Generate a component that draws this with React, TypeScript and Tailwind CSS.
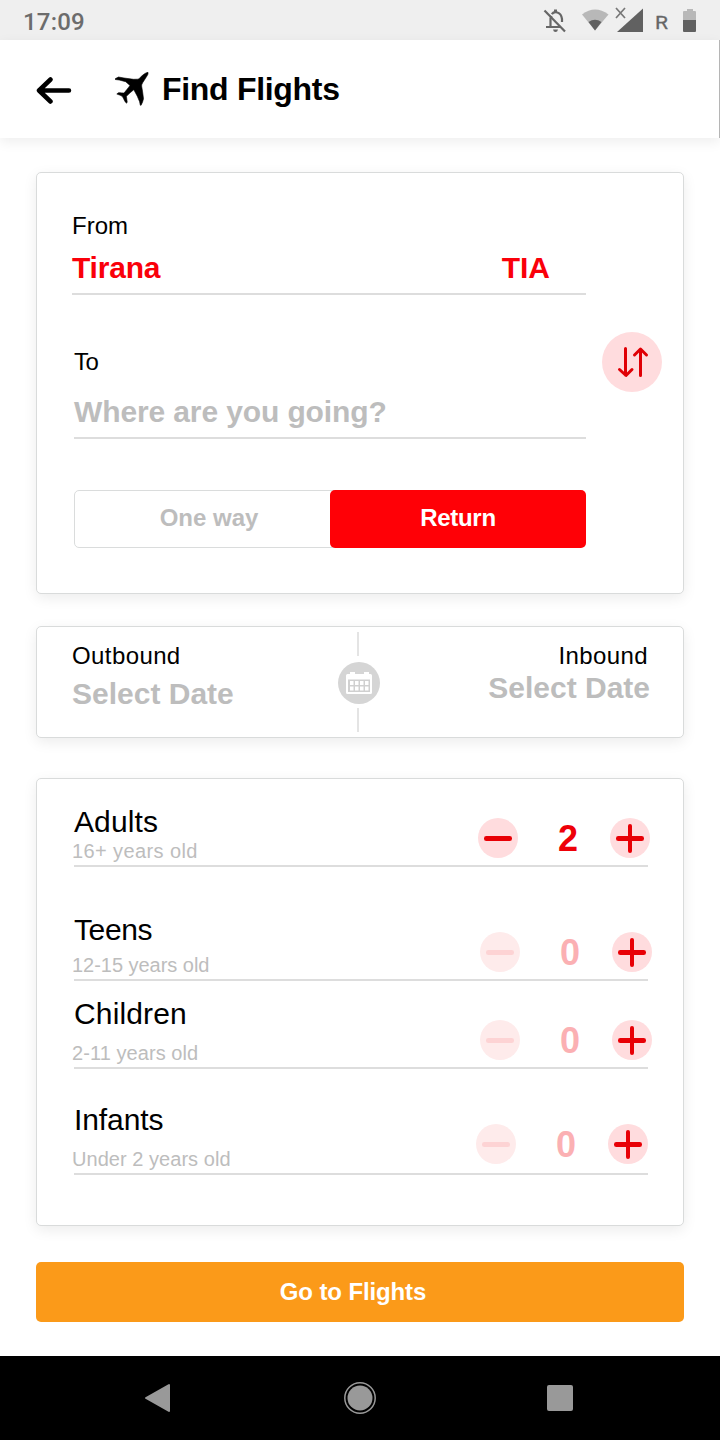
import React from "react";

const card =
  "rounded-[5px] border border-[#d9dbdb] bg-white shadow-[0_4px_14px_rgba(0,0,0,0.08)]";

function StatusBar() {
  return (
    <div className="flex h-10 shrink-0 items-center justify-between bg-[#efefef] pl-[23px] pr-[23px] font-['Roboto',sans-serif] text-[#6c6c6c]">
      <span className="pt-[3px] text-[24px] leading-7 font-medium tracking-[0.2px]">17:09</span>
      <svg width="156" height="40" viewBox="541 0 156 40" fill="none">
        <g stroke="#666" strokeWidth="2.2">
          <path d="M544.5 10.5 565 31.5" />
          <path d="M550.5 27V18.5L551.5 16M546 27h15M551.8 14.2C554 11.2 561 11 562 19v3" />
        </g>
        <path d="M554 9.5h3v3h-3zM553 29.5h5q-.5 2.5-2.5 2.5T553 29.5z" fill="#666" />
        <path d="M582 14.5Q595 4.5 608.5 14.5L595 30.5z" fill="#b8b8b8" />
        <path d="M588.5 22Q595 17.500 601.5 22L595 30.5z" fill="#616161" />
        <path d="M616 8 625 18M625 8 616 18" stroke="#777" strokeWidth="1.7" />
        <path d="M643 8.500V32H617z" fill="#616161" />
        <text x="655" y="29" fill="#666" stroke="#666" strokeWidth="0.3" fontSize="19" textLength="13" lengthAdjust="spacingAndGlyphs" fontFamily="Roboto">R</text>
        <path d="M687 9h6v2h2q1 0 1 1v8h-13v-8q0-1 1-1h3z" fill="#b8b8b8" />
        <path d="M683 20h13v11q0 1-1 1h-11q-1 0-1-1z" fill="#616161" />
      </svg>
    </div>
  );
}

function Header() {
  return (
    <header className="flex h-[98px] shrink-0 items-center border-r border-[#b5b5b5] bg-white pl-9 shadow-[0_4px_12px_rgba(0,0,0,0.07)]">
      <svg width="36" height="30" viewBox="0 0 36 30" fill="none" stroke="#000" strokeWidth="4.5" strokeLinecap="round" strokeLinejoin="round">
        <path d="M14.5 5.5 3 16.5 14.5 27.5M3 16.5H33" />
      </svg>
      <svg className="ml-[43px]" width="34" height="34" viewBox="115 72 34 34" fill="#000" stroke="#000" strokeWidth="0.6">
        <path d="M148 72.300c-3 .6-5.300 2.700-8 5.400-1 1-1.800 1.500-2.800 1.500l-3.700.1-9.500-1.300-5.500-1-3.300 1.700v.8l4 .5 6.500 1.700 4.300 3.800c-2.300 3-4.500 5.700-6 7.600-1.800-.2-3.500-.6-5.500-.4l-1.700 1.300 4.200 1.600 1.800 1.400.8 1.800 1.500 3 1.500 1.400.6-1.200-.8-5.700c2.500-2.400 5-4.800 7.400-6.600l3.500 6.500 2.300 5.500.7 3.500h.8l1.400-3 1-3.500-1-7.500-.9-5.200c0-1.500.4-2 1.200-3.500l3.500-5.500c1.500-2 2-3.200 1.700-4.700z" />
      </svg>
      <h1 className="ml-[13px] text-[32px] leading-9 font-bold tracking-[-0.3px]">Find Flights</h1>
    </header>
  );
}

function RouteCard() {
  return (
    <section className={`${card} flex h-[422px] pl-[35px]`}>
      <div className="w-[514px] pt-[39px]">
        <div className="text-[24px] leading-7">From</div>
        <div className="mt-[10px] flex justify-between border-b-2 border-[#ddd] pr-9 pb-[7px] text-[30px] leading-9 font-bold text-[#fa000a]">
          <span className="tracking-[-0.2px]">Tirana</span>
          <span>TIA</span>
        </div>
        <div className="pl-[2px]">
          <div className="mt-[53px] text-[24px] leading-7 tracking-[-0.4px]">To</div>
          <div className="mt-[18px] border-b-2 border-[#ddd] pb-[7px] text-[30px] leading-9 font-bold tracking-[-0.12px] text-[#bdbdbd]">
            Where are you going?
          </div>
          <div className="mt-[51px] flex h-[58px] text-[24px] leading-[54px] font-bold">
            <div className="h-full w-[264px] rounded-[5px] border border-[#dadcdc] pl-[6px] text-center text-[#bdbdbd]">
              One way
            </div>
            <div className="-ml-2 h-full w-64 rounded-[5px] bg-[#ff0006] pt-px text-center tracking-[-0.3px] text-white">
              Return
            </div>
          </div>
        </div>
      </div>
      <div className="mt-[159px] ml-4 h-[60px] w-[60px] rounded-full bg-[#ffdcde]">
        <svg width="60" height="60" viewBox="0 0 60 60" fill="none" stroke="#e00006" strokeWidth="3" strokeLinecap="round" strokeLinejoin="round">
          <path d="M23.5 16.5V43M17.5 37.5 24 43.5 30 37.5M38.5 43.5V17M32.5 23 38.5 17 44.5 23" />
        </svg>
      </div>
    </section>
  );
}

function DatesCard() {
  return (
    <section className={`${card} mt-8 flex h-28 pr-[33px] pl-[35px]`}>
      <div className="w-[266px] pt-[15px]">
        <div className="text-[24px] leading-7 tracking-[0.4px]">Outbound</div>
        <div className="mt-[6px] text-[30px] leading-9 font-bold text-[#bdbdbd]">Select Date</div>
      </div>
      <div className="flex w-[42px] flex-col items-center pt-[5px]">
        <div className="mr-[2px] h-6 w-[2px] bg-[#e4e4e4]" />
        <svg className="mt-[6px] mb-1 shrink-0" width="42" height="42" viewBox="0 0 42 42">
          <circle cx="21" cy="21" r="21" fill="#d5d5d5" />
          <path d="M9.500 12H12v-2h5v2h9v-2h5v2h1.500q1.500 0 1.500 1.500v17q0 1.500-1.500 1.500h-23Q8 32 8 30.500v-17Q8 12 9.500 12z" fill="#fff" />
          <rect x="10" y="17.500" width="22" height="12.500" fill="#d0d0d0" />
          <path d="M12 19h3.500v4H12zM17 19h3.500v4H17zM22 19h3.500v4H22zM27 19h3.500v4H27zM12 24.500h3.500v4H12zM17 24.500h3.500v4H17zM22 24.500h3.500v4H22zM27 24.500h3.500v4H27z" fill="#fff" />
        </svg>
        <div className="mr-[2px] h-6 w-[2px] bg-[#e4e4e4]" />
      </div>
      <div className="flex-1 pt-[15px] text-right">
        <div className="pr-[2px] text-[24px] leading-7 tracking-[0.4px]">Inbound</div>
        <div className="text-[30px] leading-9 font-bold text-[#bdbdbd]">Select Date</div>
      </div>
    </section>
  );
}

function RoundButton({ plus, disabled }: { plus?: boolean; disabled?: boolean }) {
  return (
    <svg width="40" height="40" viewBox="0 0 40 40">
      <circle cx="20" cy="20" r="20" fill={disabled ? "#feebeb" : "#ffdcde"} />
      <g fill={disabled ? "#fdd3d4" : "#e80006"}>
        <rect x="6" y="18" width="28" height="5" rx="2.3" />
        {plus && <rect x="18" y="6" width="4" height="29" rx="2" />}
      </g>
    </svg>
  );
}

type RowProps = {
  name: string;
  ages: string;
  count: number;
  box: string;
  nameClass: string;
  agesClass: string;
  stepper: string;
};

const rows: RowProps[] = [
  { name: "Adults", ages: "16+ years old", count: 2, box: "h-[63px]", nameClass: "tracking-[0.1px]", agesClass: "mt-px tracking-[0.4px]", stepper: "mb-[7px] -mr-[2px]" },
  { name: "Teens", ages: "12-15 years old", count: 0, box: "mt-[45px] h-[69px]", nameClass: "tracking-[-0.4px]", agesClass: "mt-[7px] tracking-[-0.03px]", stepper: "mb-[7px] -mr-[4px]" },
  { name: "Children", ages: "2-11 years old", count: 0, box: "mt-[15px] h-[73px]", nameClass: "tracking-[0.15px]", agesClass: "mt-[11px] tracking-[0.07px]", stepper: "mb-[7px] -mr-[4px]" },
  { name: "Infants", ages: "Under 2 years old", count: 0, box: "mt-[33px] h-[73px]", nameClass: "tracking-[-0.1px]", agesClass: "mt-[11px] tracking-[0.04px]", stepper: "mb-[9px]" },
];

function PassengerRow({ name, ages, count, box, nameClass, agesClass, stepper }: RowProps) {
  return (
    <div className={`${box} flex items-end justify-between border-b-2 border-[#ddd]`}>
      <div className="h-full">
        <div className={`${nameClass} text-[30px] leading-9`}>{name}</div>
        <div className={`${agesClass} -ml-[2px] text-[20px] leading-5 text-[#bdbdbd]`}>{ages}</div>
      </div>
      <div className={`${stepper} flex h-10 w-[172px] items-center justify-between`}>
        <RoundButton disabled={count === 0} />
        <span className={`${count === 0 ? "text-[#fbb0b3]" : "text-[#ee0008]"} pt-[2px] pl-2 text-[36px] leading-10 font-bold`}>
          {count}
        </span>
        <RoundButton plus />
      </div>
    </div>
  );
}

function NavBar() {
  return (
    <nav className="flex h-[84px] shrink-0 items-center justify-between bg-black px-[144px]">
      <svg width="32" height="32" viewBox="0 0 32 32">
        <path d="M2 16 25 3V29z" fill="#999" stroke="#999" strokeWidth="2" strokeLinejoin="round" />
      </svg>
      <svg width="32" height="32" viewBox="0 0 32 32">
        <circle cx="16" cy="16" r="15.2" fill="none" stroke="#999" strokeWidth="1.5" />
        <circle cx="16" cy="16" r="12.5" fill="#999" />
      </svg>
      <svg width="32" height="32" viewBox="0 0 32 32">
        <rect x="3" y="3" width="26" height="26" rx="2" fill="#999" />
      </svg>
    </nav>
  );
}

export default function App() {
  return (
    <div className="flex h-[1440px] w-[720px] flex-col overflow-hidden bg-white font-['Liberation_Sans',Arial,sans-serif] text-black">
      <StatusBar />
      <Header />
      <main className="flex-1 px-9 pt-[34px]">
        <RouteCard />
        <DatesCard />
        <section className={`${card} mt-10 h-[448px] pt-[25px] pr-[35px] pl-[37px]`}>
          {rows.map((row) => (
            <PassengerRow key={row.name} {...row} />
          ))}
        </section>
        <button className="mt-9 block h-[60px] w-full rounded-[5px] bg-[#fb9a19] pr-[14px] text-[24px] leading-[60px] font-bold tracking-[-0.12px] text-white">
          Go to Flights
        </button>
      </main>
      <NavBar />
    </div>
  );
}
